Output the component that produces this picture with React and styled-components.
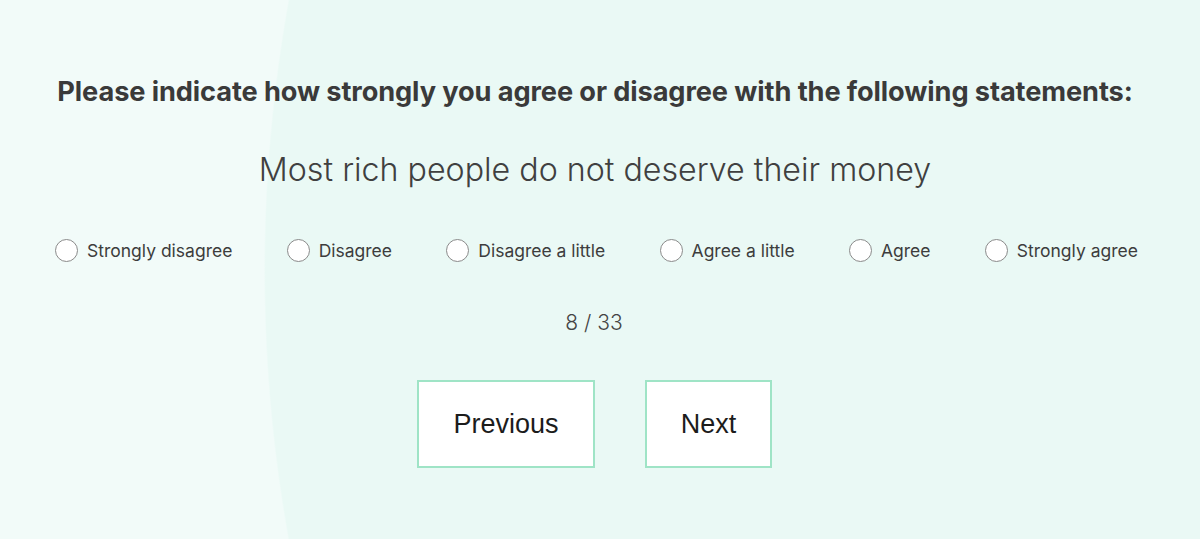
import React, { useState } from 'react';
import styled, { createGlobalStyle } from 'styled-components';

const GlobalStyle = createGlobalStyle`
  html, body {
    margin: 0;
    padding: 0;
  }
  body {
    font-family: "Inter", "Liberation Sans", sans-serif;
    color: #3b3b3b;
  }
`;

const Page = styled.main`
  width: 1200px;
  height: 539px;
  box-sizing: border-box;
  padding-right: 10px;
  overflow: hidden;
  background-color: #f2fbf9;
  background-image: radial-gradient(circle 1522px at 1786px 270px, #eaf9f5 99.9%, transparent 100%);
  display: flex;
  flex-direction: column;
  align-items: center;
`;

const Title = styled.h1`
  margin: 75px 0 0;
  font-size: 27.2px;
  font-weight: 700;
  letter-spacing: -0.1px;
  color: #3a3a3a;
`;

const Statement = styled.h2`
  margin: 42px 0 0;
  font-size: 32.2px;
  font-weight: 300;
  color: #404040;
`;

const Options = styled.div`
  align-self: stretch;
  display: flex;
  justify-content: space-between;
  margin: 50px 52px 0 55px;
`;

const Option = styled.label`
  display: flex;
  align-items: center;
  gap: 9px;
  font-size: 17.5px;
  color: #3d3d3d;
  cursor: pointer;
`;

const Radio = styled.span`
  width: 23px;
  height: 23px;
  box-sizing: border-box;
  border-radius: 50%;
  border: 1.5px solid #8a8a8a;
  background: #fff;
  display: flex;
  align-items: center;
  justify-content: center;

  &::after {
    content: '';
    width: 12px;
    height: 12px;
    border-radius: 50%;
    background: ${p => (p.$checked ? '#2f9e74' : 'transparent')};
  }
`;

const Counter = styled.div`
  margin-top: 48px;
  font-size: 21px;
  font-weight: 300;
  color: #444;
  padding-right: 2px;
`;

const Nav = styled.div`
  display: flex;
  gap: 50px;
  margin-top: 45px;
  padding-right: 1px;
`;

const NavButton = styled.button`
  width: ${p => p.$w}px;
  height: 88px;
  box-sizing: border-box;
  background: #fff;
  border: 2px solid #9fe4c6;
  font-family: "Liberation Sans", Arial, sans-serif;
  font-size: 27px;
  color: #1c1c1c;
  cursor: pointer;
`;

const choices = [
  'Strongly disagree',
  'Disagree',
  'Disagree a little',
  'Agree a little',
  'Agree',
  'Strongly agree',
];

export default function App() {
  const [picked, setPicked] = useState(null);

  return (
    <>
      <GlobalStyle />
      <Page>
        <Title>Please indicate how strongly you agree or disagree with the following statements:</Title>
        <Statement>Most rich people do not deserve their money</Statement>
        <Options>
          {choices.map((c, i) => (
            <Option key={c} onClick={() => setPicked(i)}>
              <Radio $checked={picked === i} />
              {c}
            </Option>
          ))}
        </Options>
        <Counter>8 / 33</Counter>
        <Nav>
          <NavButton $w={178}>Previous</NavButton>
          <NavButton $w={127}>Next</NavButton>
        </Nav>
      </Page>
    </>
  );
}
